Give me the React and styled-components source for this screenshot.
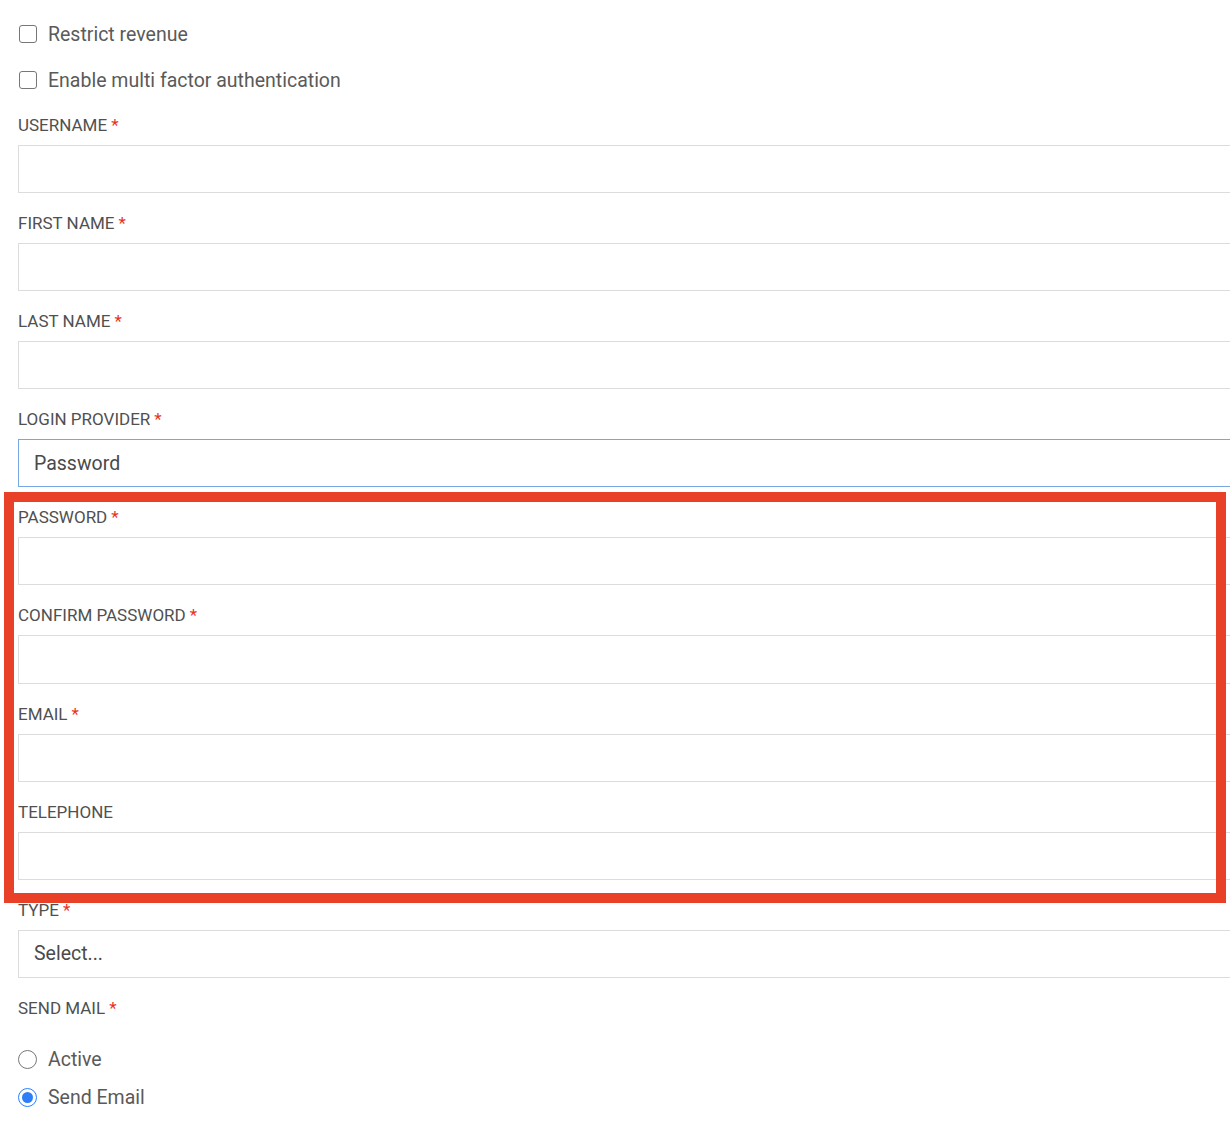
import React from 'react';
import styled, { createGlobalStyle } from 'styled-components';

const GlobalStyle = createGlobalStyle`
  html, body {
    margin: 0;
    padding: 0;
    background: #fff;
    overflow: hidden;
  }
  body {
    font-family: Roboto, "Liberation Sans", Arial, sans-serif;
    color: #555;
  }
`;

const Page = styled.div`
  padding: 22px 0 0 18px;
  width: 1250px;
  position: relative;
`;

const CheckRow = styled.label`
  display: flex;
  align-items: center;
  gap: 11px;
  height: 24px;
  margin-bottom: 22px;
  font-size: 19.5px;
  color: #5a5a5a;
  cursor: pointer;
`;

const Box = styled.span`
  width: 16px;
  height: 16px;
  border: 1.5px solid #777;
  border-radius: 3px;
  box-sizing: content-box;
  flex: none;
  margin-left: 1px;
`;

const Spacer = styled.div`
  height: 1px;
`;

const Field = styled.div`
  margin-bottom: 20px;
`;

const Label = styled.div`
  height: 20px;
  line-height: 20px;
  font-size: 17px;
  text-transform: uppercase;
  color: #505050;
  margin-bottom: 10px;
  white-space: nowrap;
`;

const Star = styled.span`
  color: #e8321f;
  margin-left: 4px;
`;

const Input = styled.div`
  box-sizing: border-box;
  height: 48.1px;
  width: 1240px;
  border: 1px solid ${p => (p.$focused ? '#76a6e3' : '#dcdcdc')};
  padding: 0 15px;
  display: flex;
  align-items: center;
  font-size: 19.5px;
  color: #4a4a4a;
`;

const Highlight = styled.div`
  position: relative;
  display: flow-root;

  &::after {
    content: '';
    position: absolute;
    left: -14px;
    top: -15px;
    width: 1222px;
    bottom: -3px;
    border: 10px solid #e94128;
    box-sizing: border-box;
    pointer-events: none;
  }
`;

const RadioGroup = styled.div`
  display: flex;
  flex-direction: column;
  gap: 14px;
  padding-top: 20px;
`;

const RadioRow = styled.label`
  display: flex;
  align-items: center;
  gap: 11px;
  height: 24px;
  font-size: 19.5px;
  color: #5a5a5a;
`;

const Radio = styled.span`
  width: 17px;
  height: 17px;
  border-radius: 50%;
  border: 1.5px solid ${p => (p.$checked ? '#2d7ff9' : '#777')};
  box-sizing: content-box;
  flex: none;
  display: flex;
  align-items: center;
  justify-content: center;

  &::after {
    content: '';
    width: 11px;
    height: 11px;
    border-radius: 50%;
    background: ${p => (p.$checked ? '#2d7ff9' : 'transparent')};
  }
`;

function FormField({ label, required, value, focused }) {
  return (
    <Field>
      <Label>
        {label}
        {required && <Star>*</Star>}
      </Label>
      <Input $focused={focused}>{value}</Input>
    </Field>
  );
}

export default function App() {
  return (
    <>
      <GlobalStyle />
      <Page>
        <CheckRow>
          <Box />
          Restrict revenue
        </CheckRow>
        <CheckRow>
          <Box />
          Enable multi factor authentication
        </CheckRow>
        <Spacer />
        <FormField label="Username" required />
        <FormField label="First name" required />
        <FormField label="Last name" required />
        <FormField label="Login provider" required value="Password" focused />
        <Highlight>
          <FormField label="Password" required />
          <FormField label="Confirm password" required />
          <FormField label="Email" required />
          <FormField label="Telephone" />
        </Highlight>
        <FormField label="Type" required value="Select..." />
        <Label>
          Send mail<Star>*</Star>
        </Label>
        <RadioGroup>
          <RadioRow>
            <Radio />
            Active
          </RadioRow>
          <RadioRow>
            <Radio $checked />
            Send Email
          </RadioRow>
        </RadioGroup>
      </Page>
    </>
  );
}
